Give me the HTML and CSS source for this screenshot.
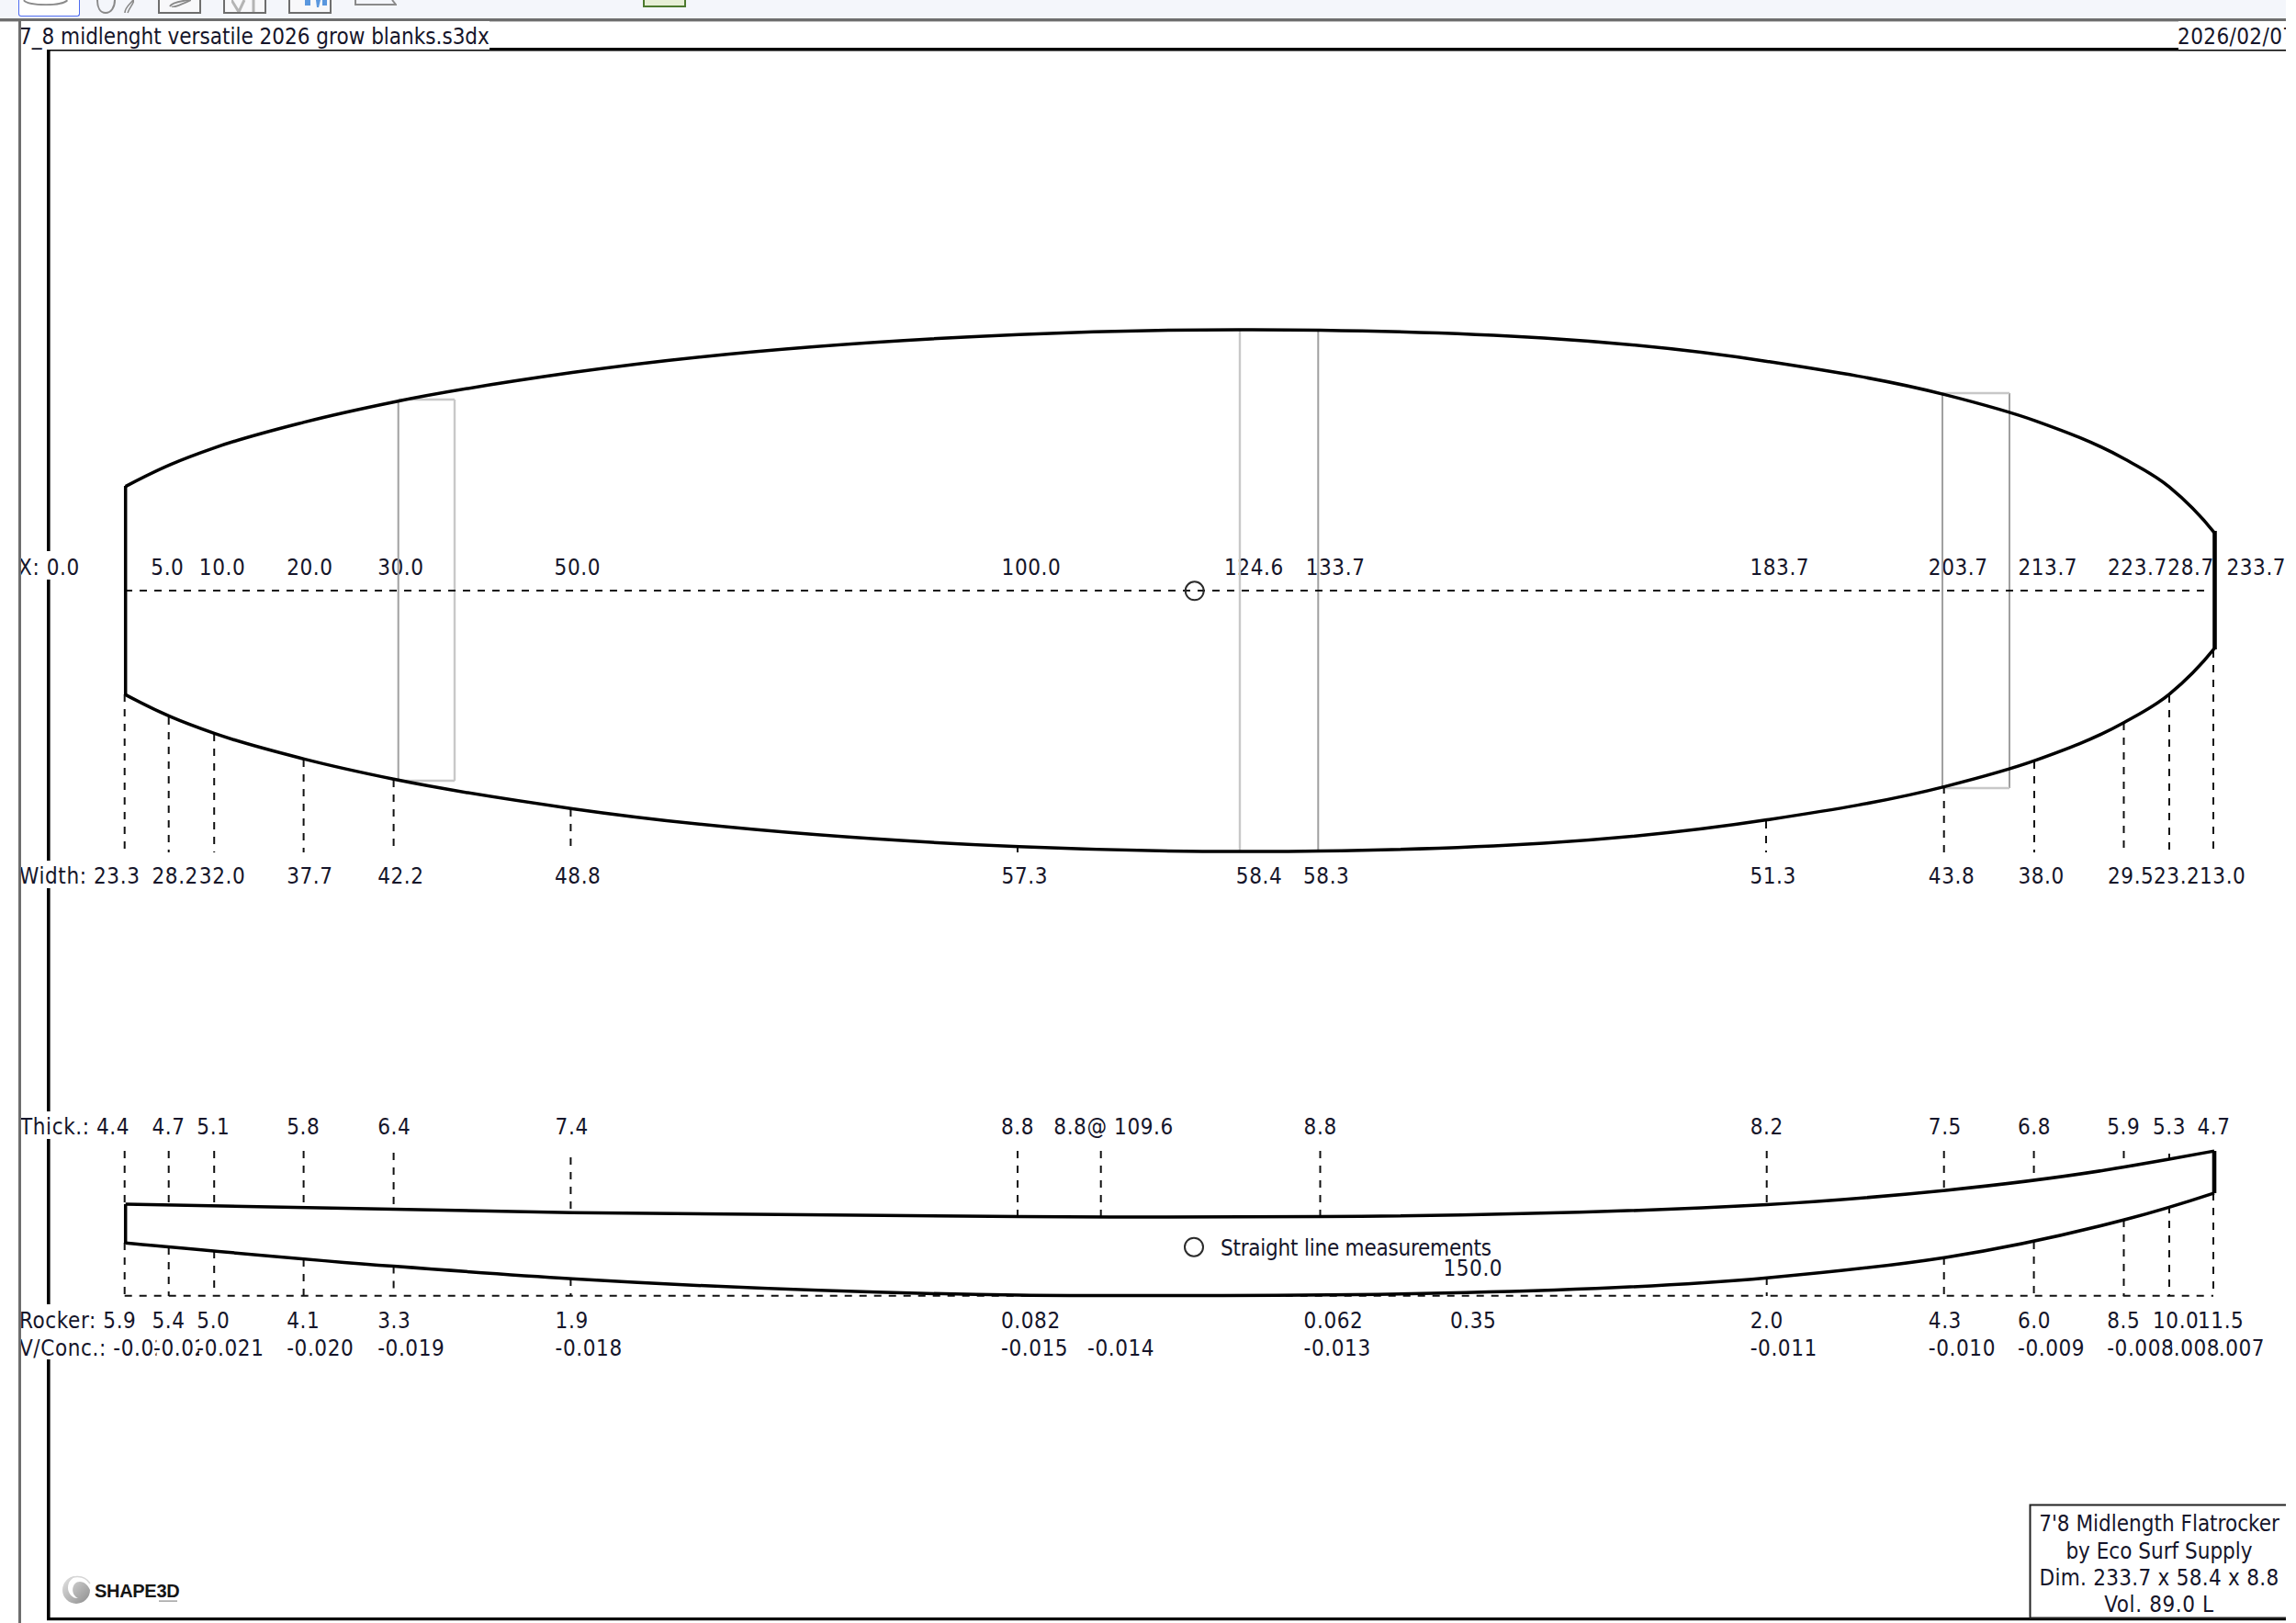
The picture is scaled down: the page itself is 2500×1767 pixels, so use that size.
FILE: index.html
```html
<!DOCTYPE html>
<html lang="en">
<head>
<meta charset="utf-8">
<title>7_8 midlenght versatile 2026 grow blanks.s3dx</title>
<link rel="stylesheet" href="styles.css">
</head>
<body>
<div class="app">
  <header class="toolbar">
    <div class="tool tool-selected">
      <svg width="67" height="18" viewBox="0 0 67 18"><path class="ico" d="M5 0C8 4 20 5 30 5S50 4 54 0"/></svg>
    </div>
    <div class="tool tool-shapes">
      <svg width="41" height="15" viewBox="0 0 41 15"><path class="ico" d="M1 0C1 8 4 14 10 14S20 8 20 0"/><path class="ico ico-thick" d="M31 14C31 8 36 5 40 0M34 14C36 8 40 5 41 0"/></svg>
    </div>
    <div class="tool tool-box">
      <svg width="24" height="8" viewBox="0 0 24 8"><path class="ico" d="M1 7C3 3 14 1 22 0"/><path class="ico" d="M3 8C8 7 16 4 24 0"/></svg>
    </div>
    <div class="tool tool-box">
      <svg width="30" height="13" viewBox="0 0 30 13"><path class="ico ico-soft" d="M0 0L8 13L14 0M24 0V13"/></svg>
    </div>
    <div class="tool tool-box tool-blue">
      <svg width="26" height="9" viewBox="0 0 26 9"><path class="ico-blue" d="M1 0H7V6H1ZM13 0H18L16 8H14ZM20 0H25V6H20Z"/></svg>
    </div>
    <svg class="tool-trap" width="46" height="6" viewBox="0 0 46 6"><path class="ico" d="M1 0V5H45L41 0"/></svg>
    <div class="tool-green"></div>
  </header>

  <svg class="sheet" width="2489" height="1747" viewBox="0 20 2489 1747" xmlns="http://www.w3.org/2000/svg">
    <defs>
      <path id="rail" d="M136.7 113.4C152.9 122 169.2 130.1 185.4 137.2C201.6 144.2 217.8 150.05 234 155.7C266.4 167 298.9 175.1 331.3 183.4C363.7 191.7 396.2 198.65 428.6 205.3C493.5 218.6 558.3 228.2 623.2 237.4C785.4 260.5 947.5 271.8 1109.7 278.8C1189.5 282.2 1269.2 283.95 1349 284.1C1378.6 284.16 1408.1 284.06 1437.7 283.6C1599.8 281.1 1761.9 274.55 1924 249.6C1988.9 239.6 2053.7 229.7 2118.6 213.1C2151.1 204.8 2183.5 196.5 2216 184.9C2248.3 173.3 2280.7 161.5 2313 143.5C2329.3 134.4 2345.7 126.3 2362 112.9C2378.3 99.5 2394.7 83.6 2411 63.2"/>
      <linearGradient id="wave" x1="0" y1="0" x2="1" y2="1">
        <stop offset="0" stop-color="#e4e4e4"/>
        <stop offset="1" stop-color="#8c8c8c"/>
      </linearGradient>
      <clipPath id="page"><rect x="22" y="20" width="2467" height="1747"/></clipPath>
    </defs>

    <!-- frame -->
    <rect class="frame-grey" x="0" y="20" width="2489" height="3.4"/>
    <rect class="frame-soft" x="51" y="55" width="2438" height="1"/>
    <rect class="frame-black" x="51" y="52" width="2438" height="3.4"/>
    <rect class="frame-black" x="51" y="52" width="3.6" height="1712"/>
    <rect class="frame-black" x="51" y="1761" width="2438" height="3.2"/>

    <!-- white backgrounds of the labels that cross the frame -->
    <rect class="mask" x="22" y="23" width="511" height="31"/>
    <rect class="mask" x="2372" y="23" width="117" height="31"/>
    <rect class="mask" x="22" y="600" width="66" height="31"/>
    <rect class="mask" x="22" y="937" width="130" height="30"/>
    <rect class="mask" x="22" y="1210" width="118" height="30"/>
    <rect class="mask" x="22" y="1420" width="130" height="60"/>

    <g class="labels" clip-path="url(#page)">
      <text x="21" y="48">7_8 midlenght versatile 2026 grow blanks.s3dx</text>
      <text class="date" x="2371" y="48">2026/02/07</text>

      <g class="num" transform="translate(0,626)">
        <text x="20">X: 0.0</text><text x="164.3">5.0</text><text x="216.8">10.0</text><text x="312.2">20.0</text><text x="411.2">30.0</text><text x="603.6">50.0</text><text x="1090.6">100.0</text><text x="1333">124.6</text><text x="1421.7">133.7</text><text x="1905.4">183.7</text><text x="2099.8">203.7</text><text x="2197.4">213.7</text>
        <text x="2346">228.7</text>
        <rect class="mask" x="2295" y="-22" width="63" height="30"/>
        <text x="2295">223.7</text>
        <text x="2424.4">233.7</text>
      </g>
      <g class="num" transform="translate(0,962)">
        <text x="21">Width: 23.3</text><text x="165.5">28.2</text><text x="216.8">32.0</text><text x="312.2">37.7</text><text x="411.2">42.2</text><text x="604">48.8</text><text x="1090.6">57.3</text><text x="1345.8">58.4</text><text x="1419">58.3</text><text x="1905.4">51.3</text><text x="2099.8">43.8</text><text x="2197.4">38.0</text><text x="2295">29.5</text><text x="2345">23.2</text><text x="2395">13.0</text>
      </g>
      <g class="num" transform="translate(0,1235)">
        <text x="22">Thick.: 4.4</text><text x="165.5">4.7</text><text x="214.3">5.1</text><text x="312.2">5.8</text><text x="411.2">6.4</text><text x="604.6">7.4</text><text x="1090">8.8</text><text x="1147.3">8.8@ 109.6</text><text x="1419.6">8.8</text><text x="1905.7">8.2</text><text x="2099.8">7.5</text><text x="2197">6.8</text><text x="2294.2">5.9</text><text x="2344">5.3</text><text x="2392.5">4.7</text>
      </g>
      <g class="num" transform="translate(0,1446)">
        <text x="21">Rocker: 5.9</text><text x="165.5">5.4</text><text x="214.3">5.0</text><text x="312.2">4.1</text><text x="411.2">3.3</text><text x="604.6">1.9</text><text x="1090">0.082</text><text x="1419.6">0.062</text><text x="1579">0.35</text><text x="1905.7">2.0</text><text x="2099.8">4.3</text><text x="2197">6.0</text><text x="2294.2">8.5</text><text x="2344">10.0</text><text x="2393">11.5</text>
      </g>
      <g class="num" transform="translate(0,1476)">
        <text x="21">V/Conc.: -0.023</text>
        <rect class="mask" x="170.5" y="-22" width="46" height="30"/>
        <text x="167">-0.022</text>
        <rect class="mask" x="217" y="-22" width="69" height="30"/>
        <text x="214.3">-0.021</text>
        <text x="312.2">-0.020</text><text x="411.2">-0.019</text><text x="604.6">-0.018</text><text x="1090">-0.015</text><text x="1184">-0.014</text><text x="1419.6">-0.013</text><text x="1905.7">-0.011</text><text x="2099.8">-0.010</text><text x="2197">-0.009</text>
        <text x="2393">-0.007</text>
        <rect class="mask" x="2344" y="-22" width="71" height="30"/>
        <text x="2344">-0.008</text>
        <rect class="mask" x="2294" y="-22" width="70" height="30"/>
        <text x="2294.2">-0.008</text>
      </g>
      <text class="note" x="1329" y="1367">Straight line measurements</text>
      <text class="num" x="1571.4" y="1389">150.0</text>
    </g>

    <!-- blanks rails -->
    <path class="blank-dark" d="M433.7 435V850M1435.3 359V927M2115 428V858M2188 428V858"/>
    <path class="blank-light" d="M1350 359V927M495 435V850M433.7 435H495M433.7 850H495M2115 428H2188M2115 858H2188"/>

    <!-- measure lines -->
    <path class="dash" d="M136 643H2406"/>
    <path class="dash" d="M135.7 756V928M183.7 781V928M233.2 799V928M330.6 827V928M428.6 849V928M621.4 881V928M1108 923V928M1923 894V928M2116.7 856V928M2215 829V928M2312.5 787V928M2362 757V928M2410 708V928"/>
    <path class="dash" d="M135.7 1253V1311M183.7 1253V1312M233.2 1253V1313M330.6 1253V1314.5M428.6 1255V1316.5M621.4 1260V1320M1108 1253V1324.5M1198.7 1253V1325M1437.5 1253V1324.5M1923.7 1253V1311.4M2116.7 1253V1296M2214.6 1253V1286M2312.5 1253V1270.6M2362 1256V1262"/>
    <path class="dash" d="M135.7 1353V1411M183.7 1358V1411M233.2 1362V1411M330.6 1371V1411M428.6 1378.6V1411M621.4 1392V1411M1923.7 1391V1411M2116.7 1369V1411M2214.6 1352V1411M2312.5 1328V1411M2362 1313V1411M2410 1299V1411"/>
    <path class="dash" d="M135.7 1410.7H2410"/>

    <!-- plan outline -->
    <use class="outline" href="#rail" transform="translate(0,643)"/>
    <use class="outline" href="#rail" transform="translate(0,643) scale(1,-1)"/>
    <path class="outline" d="M136.7 529V757"/>
    <path class="outline outline-tail" d="M2411.5 578V707"/>

    <!-- profile outline -->
    <path class="outline" d="M136.7 1311L623.2 1320.2C785 1323 947 1324.5 1109.7 1324.6C1219 1325.3 1328 1325.2 1437.7 1324.5C1600 1323.5 1762 1320.3 1924 1311.4C1989 1307.8 2054 1302.4 2118.6 1295.9C2183 1289.4 2248 1281.5 2313 1270.6C2346 1265 2378 1259 2411 1253.1"/>
    <path class="outline" d="M136.7 1353.3C234 1362.1 331.3 1371.2 428.6 1378.6C493.5 1383.5 558.3 1388.3 623.2 1392.2C785.4 1401.9 947.5 1408 1109.7 1409.9C1173 1410.7 1236 1410.6 1300 1410.4C1398.7 1410.4 1497.5 1409.7 1596.2 1407.3C1705.5 1404.7 1814.7 1401 1924 1391.2C1988.9 1385.4 2053.7 1378.9 2118.6 1368.9C2183.4 1358.9 2248.2 1344.8 2313 1328C2345.7 1319.5 2378.3 1309.6 2411 1298.8"/>
    <path class="outline" d="M136.7 1311V1354"/>
    <path class="outline outline-tail" d="M2411 1253V1299"/>

    <circle class="marker" cx="1300.7" cy="643.3" r="10"/>
    <circle class="marker" cx="1300" cy="1357.7" r="10"/>

    <rect class="frame-line" x="20" y="20" width="3" height="1747"/>

    <!-- logo -->
    <g class="logo">
      <path fill="url(#wave)" d="M83 1716A15 15 0 1 0 98 1731C96 1726 92 1722 87 1722C78 1722 76 1736 85 1740C80 1741 74 1735 74 1729C74 1722 78 1718 83 1716Z"/>
      <path class="logo-arc" d="M71 1724C76 1715 91 1713 98 1724"/>
      <text class="logo-text" x="103" y="1739">SHAPE3D</text>
      <rect class="logo-tag" x="173" y="1742.5" width="20" height="1.2"/>
    </g>

    <!-- info box -->
    <rect class="info" x="2210.5" y="1638.5" width="290" height="123"/>
    <g class="labels info-text">
      <text x="2351" y="1667">7'8 Midlength Flatrocker</text>
      <text x="2351" y="1696.5">by Eco Surf Supply</text>
      <text class="dim" x="2351" y="1726">Dim. 233.7 x 58.4 x 8.8</text>
      <text class="num" x="2351" y="1755">Vol. 89.0 L</text>
    </g>
  </svg>
</div>
</body>
</html>
```
FILE: styles.css
```css
html, body {
  margin: 0;
  padding: 0;
  background: #ffffff;
}

.app {
  width: 2489px;
  height: 1767px;
  overflow: hidden;
}

/* toolbar, cut off by the top of the picture */
.toolbar {
  height: 20px;
  box-sizing: border-box;
  background: #f4f6fb;
  display: flex;
  align-items: flex-start;
  padding-left: 20px;
}

.tool {
  box-sizing: border-box;
  display: flex;
  align-items: flex-start;
  justify-content: center;
}

.tool-selected {
  width: 67px;
  height: 18px;
  border: 1.5px solid #4f6cf0;
  border-top: 0;
  border-radius: 0 0 3px 3px;
  background: #ffffff;
}

.tool-shapes {
  width: 41px;
  height: 15px;
  margin-left: 18px;
}

.tool-box {
  width: 47px;
  height: 15px;
  margin-left: 24px;
  border: 2px solid #6e6e6e;
  border-top: 0;
  background: #f8f8fa;
}

.tool-shapes + .tool-box {
  margin-left: 26px;
}

.tool-blue {
  justify-content: flex-end;
  padding-right: 2px;
}

.tool-trap {
  margin-left: 25px;
}

.tool-green {
  box-sizing: border-box;
  width: 47px;
  height: 8px;
  margin-left: 268px;
  background: #e7efd6;
  border: 2px solid #4d7a2e;
  border-top: 0;
}

.ico {
  fill: none;
  stroke: #8a8a8a;
  stroke-width: 2;
}

.ico-thick {
  stroke-width: 1.6;
}

.ico-soft {
  stroke: #b4b4b4;
  stroke-width: 3;
}

.ico-blue {
  fill: #5a97de;
}

/* drawing sheet */
.sheet {
  display: block;
}

.frame-grey,
.frame-line {
  fill: #6e6e6e;
}

.frame-soft {
  fill: #c8c8c8;
}

.frame-black {
  fill: #000000;
}

.mask {
  fill: #ffffff;
}

.labels text {
  font-family: "DejaVu Sans", Tahoma, sans-serif;
  font-stretch: condensed;
  font-size: 24px;
  fill: #15152a;
}

.labels .num,
.labels .num text {
  letter-spacing: 0.6px;
}

.labels .date {
  letter-spacing: 0.4px;
}

.labels .note {
  letter-spacing: -0.23px;
}

.labels .dim {
  letter-spacing: 0.28px;
}

.info-text text {
  text-anchor: middle;
}

.blank-dark,
.blank-light {
  fill: none;
  stroke-width: 2;
}

.blank-dark {
  stroke: #a0a0a0;
}

.blank-light {
  stroke: #c8c8c8;
  stroke-width: 2.4;
}

.dash {
  fill: none;
  stroke: #111111;
  stroke-width: 2;
  stroke-dasharray: 8 8;
}

.outline {
  fill: none;
  stroke: #000000;
  stroke-width: 3.5;
}

.outline-tail {
  stroke-width: 4.6;
}

.marker {
  fill: none;
  stroke: #2b2b2b;
  stroke-width: 2;
}

.logo-arc {
  fill: none;
  stroke: #d6d6d6;
  stroke-width: 1.5;
}

.logo-text {
  font-family: "Liberation Sans", Arial, sans-serif;
  font-weight: 700;
  font-size: 20px;
  letter-spacing: -0.3px;
  fill: #151515;
}

.logo-tag {
  fill: #8a8a8a;
}

.info {
  fill: #ffffff;
  stroke: #222222;
  stroke-width: 2;
}
```
